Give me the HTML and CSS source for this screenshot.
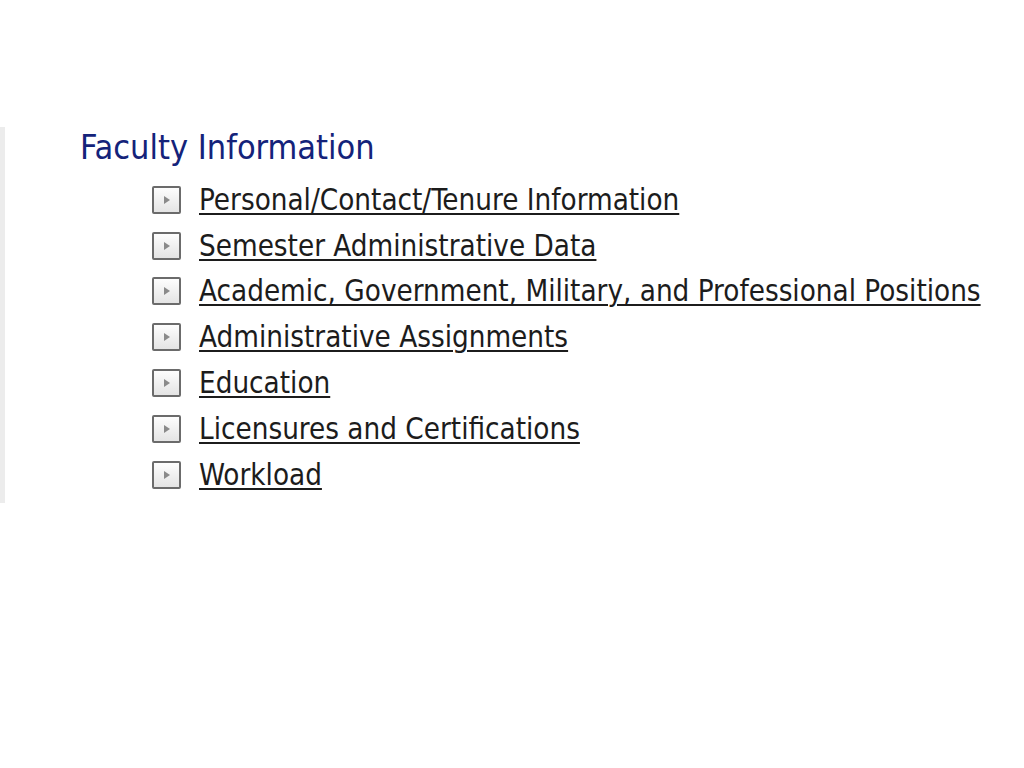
FILE: index.html
```html
<!DOCTYPE html>
<html>
<head>
    <title>Faculty Information</title>
    <link rel="stylesheet" href="styles.css">
</head>
<body>
    <div class="page">
        <div class="side-strip"></div>
        <div class="content">
            <h2 class="section-title">Faculty Information</h2>
            <ul class="link-list">
                <li><span class="expander"><span class="arrow"></span></span><a href="#">Personal/Contact/Tenure Information</a></li>
                <li><span class="expander"><span class="arrow"></span></span><a href="#">Semester Administrative Data</a></li>
                <li><span class="expander"><span class="arrow"></span></span><a href="#">Academic, Government, Military, and Professional Positions</a></li>
                <li><span class="expander"><span class="arrow"></span></span><a href="#">Administrative Assignments</a></li>
                <li><span class="expander"><span class="arrow"></span></span><a href="#">Education</a></li>
                <li><span class="expander"><span class="arrow"></span></span><a href="#">Licensures and Certifications</a></li>
                <li><span class="expander"><span class="arrow"></span></span><a href="#">Workload</a></li>
            </ul>
        </div>
    </div>
</body>
</html>
```
FILE: styles.css
```css
body {
    margin: 0;
    background-color: #ffffff;
    font-family: "DejaVu Sans Condensed", "DejaVu Sans", sans-serif;
}
.page {
    display: flex;
    margin-top: 127px;
}
.side-strip {
    width: 5px;
    height: 376px;
    background-color: #ececec;
}
.content {
    padding-left: 75px;
}
.section-title {
    margin: 0;
    font-size: 34px;
    font-weight: normal;
    color: #14237a;
    line-height: 40px;
}
.link-list {
    list-style: none;
    margin: 10px 0 0 0;
    padding-left: 72px;
}
.link-list li {
    display: flex;
    align-items: center;
    gap: 18px;
    height: 45.8px;
}
.link-list a {
    color: #1c1c1c;
    font-size: 29.3px;
    line-height: 34px;
    text-decoration: underline;
    text-decoration-thickness: 2px;
    text-underline-offset: 3px;
}
.expander {
    width: 25px;
    height: 24px;
    border: 2px solid #6b6b6b;
    border-radius: 2px;
    background: linear-gradient(#fdfdfd, #e4e4e4);
    display: flex;
    align-items: center;
    justify-content: center;
}
.arrow {
    width: 0;
    height: 0;
    border-left: 6px solid #8a8a8a;
    border-top: 4px solid transparent;
    border-bottom: 4px solid transparent;
}
```
